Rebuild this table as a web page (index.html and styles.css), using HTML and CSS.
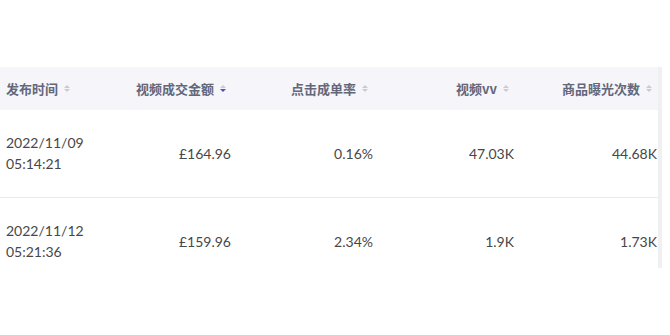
FILE: index.html
```html
<!DOCTYPE html>
<html lang="zh">
<head>
<meta charset="utf-8">
<link rel="stylesheet" href="styles.css">
</head>
<body>
<div class="table">
  <div class="row head">
    <div class="cell first"><span class="label">发布时间</span><span class="sort"><i class="up"></i><i class="down"></i></span></div>
    <div class="cell"><span class="label">视频成交金额</span><span class="sort"><i class="up"></i><i class="down active"></i></span></div>
    <div class="cell"><span class="label">点击成单率</span><span class="sort"><i class="up"></i><i class="down"></i></span></div>
    <div class="cell"><span class="label">视频vv</span><span class="sort"><i class="up"></i><i class="down"></i></span></div>
    <div class="cell"><span class="label">商品曝光次数</span><span class="sort"><i class="up"></i><i class="down"></i></span></div>
  </div>
  <div class="row body">
    <div class="cell first">2022/11/09<br>05:14:21</div>
    <div class="cell">£164.96</div>
    <div class="cell">0.16%</div>
    <div class="cell">47.03K</div>
    <div class="cell">44.68K</div>
  </div>
  <div class="row body">
    <div class="cell first">2022/11/12<br>05:21:36</div>
    <div class="cell">£159.96</div>
    <div class="cell">2.34%</div>
    <div class="cell">1.9K</div>
    <div class="cell">1.73K</div>
  </div>
</div>
</body>
</html>
```
FILE: styles.css
```css
html, body {
  margin: 0;
  padding: 0;
  background: #ffffff;
}
body {
  font-family: Lato, "Noto Sans CJK SC", sans-serif;
}
.table {
  margin-top: 67px;
  width: 658px;
  height: 201px;
  overflow: hidden;
  border-right: 4px solid #f0f0f3;
}
.row {
  display: grid;
  grid-template-columns: 90px 142px 142px 141px 143px;
}
.head {
  height: 43px;
  background: #f6f6fa;
  align-items: center;
}
.head .cell {
  display: flex;
  align-items: center;
  justify-content: flex-end;
  padding-right: 6px;
  font-family: "Noto Sans CJK SC", sans-serif;
  font-size: 13px;
  font-weight: 700;
  color: #63677a;
}
.head .cell.first {
  justify-content: flex-start;
  padding-left: 6px;
  padding-right: 0;
}
.sort {
  display: inline-flex;
  flex-direction: column;
  gap: 1px;
  margin-left: 6px;
}
.sort i {
  display: block;
  width: 0;
  height: 0;
  border-left: 3px solid transparent;
  border-right: 3px solid transparent;
}
.sort .up {
  border-bottom: 3px solid #c9cad2;
}
.sort .down {
  border-top: 3px solid #c9cad2;
}
.sort .down.active {
  border-top-color: #4b51c4;
}
.body {
  height: 88px;
  box-sizing: border-box;
  border-bottom: 1px solid #ececee;
}
.body .cell {
  font-size: 14px;
  line-height: 21px;
  color: #474747;
  text-align: right;
  padding-right: 1px;
  display: flex;
  align-items: center;
  justify-content: flex-end;
}
.body .cell.first {
  display: block;
  text-align: left;
  padding: 22px 0 0 6px;
}
```
